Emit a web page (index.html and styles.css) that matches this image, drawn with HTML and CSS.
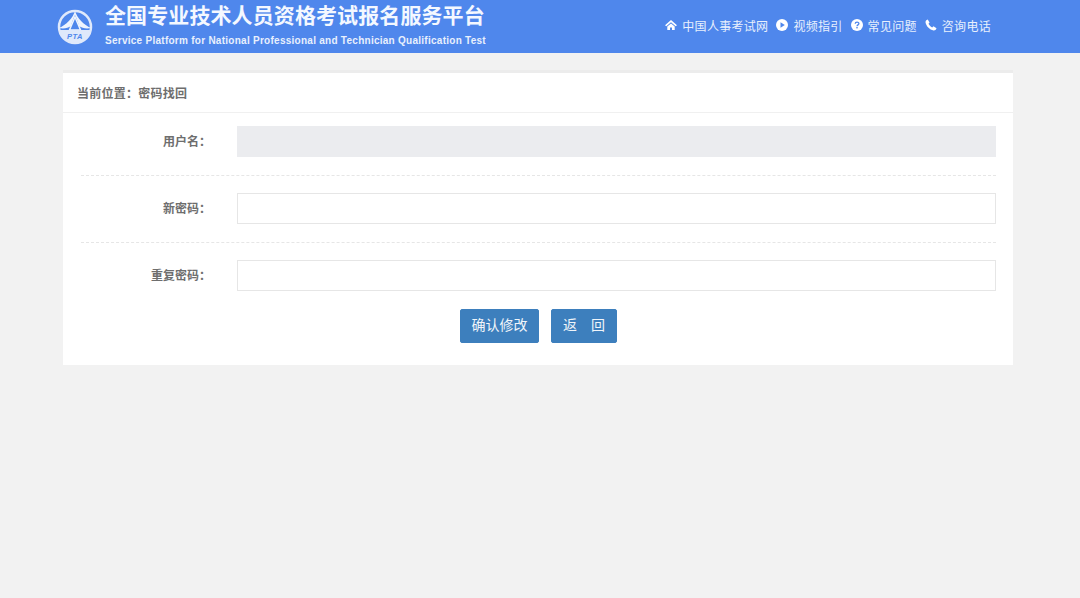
FILE: index.html
```html
<!DOCTYPE html>
<html lang="zh-CN">
<head>
<meta charset="utf-8">
<title>密码找回</title>
<link rel="stylesheet" href="styles.css">
</head>
<body>
<header class="top">
  <div class="brand">
    <svg class="logo" viewBox="0 0 36 36" aria-hidden="true">
      <circle cx="18" cy="18" r="16" fill="none" stroke="#dfe9fb" stroke-width="2.500"/>
      <path d="M18 2 C16 9 9 16 2 19 C7 20 11 19 14 17 C15 13 16.500 9 18 6 C19.500 9 21 13 22 17 C25 19 29 20 34 19 C27 16 20 9 18 2Z" fill="#eef4fe"/>
      <path d="M18 8 L23.500 21 H12.500Z" fill="none" stroke="#eef4fe" stroke-width="1.500"/>
      <path d="M2.500 21 H33.500 C32 29 26 34 18 34 C10 34 4 29 2.500 21Z" fill="#dfe9fb"/>
      <text x="18" y="29.500" class="logo-text">PTA</text>
    </svg>
    <div class="titles">
      <h1 class="title">全国专业技术人员资格考试报名服务平台</h1>
      <p class="subtitle">Service Platform for National Professional and Technician Qualification Test</p>
    </div>
  </div>
  <nav class="nav">
    <a class="nav-item"><svg class="ico" viewBox="0 0 12 12"><path d="M6 1 L12 6.200 L10.700 7.300 L6 3.200 L1.300 7.300 L0 6.200Z M2.300 7.600 L6 4.400 L9.700 7.600 V11 H7 V8.500 H5 V11 H2.300Z" fill="#fff"/></svg>中国人事考试网</a>
    <a class="nav-item"><svg class="ico" viewBox="0 0 12 12"><circle cx="6" cy="6" r="6" fill="#fff"/><path d="M4.500 3.300 L8.800 6 L4.500 8.700Z" fill="#4f87ec"/></svg>视频指引</a>
    <a class="nav-item"><svg class="ico" viewBox="0 0 12 12"><circle cx="6" cy="6" r="6" fill="#fff"/><path d="M4.200 4.700 C4.300 2.600 7.900 2.600 7.900 4.600 C7.900 5.900 6 5.900 6 7.300" fill="none" stroke="#4f87ec" stroke-width="1.300"/><rect x="5.300" y="8" width="1.400" height="1.400" fill="#4f87ec"/></svg>常见问题</a>
    <a class="nav-item"><svg class="ico" viewBox="0 0 12 12"><path d="M2.700 .5 L4.600 3.400 L3.500 4.700 C4.200 6.200 5.500 7.600 7.200 8.400 L8.500 7.300 L11.500 9.300 C11 10.800 9.800 11.700 8.600 11.500 C4.500 10.700 1.200 7.300 .5 3.300 C.4 2 1.300 1 2.700 .5Z" fill="#fff"/></svg>咨询电话</a>
  </nav>
</header>
<main class="card">
  <div class="crumb">当前位置：密码找回</div>
  <form class="form">
    <div class="row row-line">
      <label class="label">用户名：</label>
      <div class="field field-disabled"></div>
    </div>
    <div class="row row-line">
      <label class="label">新密码：</label>
      <input class="field" type="password">
    </div>
    <div class="row">
      <label class="label">重复密码：</label>
      <input class="field" type="password">
    </div>
    <div class="actions">
      <button class="btn btn-confirm" type="button">确认修改</button>
      <button class="btn btn-back" type="button">返&emsp;回</button>
    </div>
  </form>
</main>
</body>
</html>
```
FILE: styles.css
```css
* { box-sizing: border-box; }
html, body { margin: 0; height: 100%; }
body {
  background: #f2f2f2;
  font-family: "Liberation Sans", "Noto Sans CJK SC", sans-serif;
  color: #666;
}
.top {
  height: 53px;
  background: #4f87ec;
  display: flex;
  justify-content: space-between;
  padding: 0 89px 0 57px;
  color: #fff;
}
.brand { display: flex; align-items: flex-start; gap: 12px; }
.logo { width: 36px; height: 36px; margin-top: 9px; }
.logo-text {
  font: italic bold 7.500px "Liberation Sans", sans-serif;
  fill: #4f87ec;
  text-anchor: middle;
  letter-spacing: .5px;
}
.titles { padding-top: 2px; }
.title {
  margin: 0;
  font-size: 21px;
  line-height: 28px;
  font-weight: 700;
  letter-spacing: .1px;
  color: #f4f8ff;
  white-space: nowrap;
}
.subtitle {
  margin: 4px 0 0;
  font-size: 10px;
  line-height: 13px;
  font-weight: 700;
  letter-spacing: .265px;
  color: #e8f0fd;
  white-space: nowrap;
}
.nav { display: flex; align-items: center; gap: 8px; padding-bottom: 3px; }
.nav-item {
  display: flex;
  align-items: center;
  gap: 5px;
  font-size: 12px;
  letter-spacing: .3px;
  color: #e8f0fd;
}
.ico { width: 12px; height: 12px; flex: none; }
.card {
  width: 950px;
  margin: 17px 0 0 63px;
  background: #fff;
  border-top: 3px solid #ececec;
}
.crumb {
  height: 40px;
  padding-left: 14px;
  border-bottom: 1px solid #f0f0f0;
  font-size: 12px;
  font-weight: 700;
  letter-spacing: .25px;
  line-height: 42px;
  color: #6e6e6e;
}
.form { padding: 13px 17px 22px 18px; }
.row { display: flex; align-items: flex-start; }
.row-line {
  padding-bottom: 18px;
  border-bottom: 1px dashed #e6e6e6;
  margin-bottom: 17px;
}
.label {
  width: 130px;
  height: 31px;
  margin-right: 26px;
  text-align: right;
  font-size: 12px;
  font-weight: 700;
  line-height: 31px;
  padding-top: 1px;
  color: #6e6e6e;
  flex: none;
}
.field {
  display: block;
  flex: 1;
  min-width: 0;
  height: 31px;
  padding: 0 8px;
  border: 1px solid #e6e6e6;
  background: #fff;
  outline: 0;
}
.field-disabled { background: #ebecef; border-color: #ebecef; }
.actions { display: flex; justify-content: center; gap: 12px; margin-top: 18px; }
.btn {
  height: 34px;
  padding: 0 0 2px;
  border: 1px solid #3d7fbd;
  border-radius: 2px;
  background: #3d7fbd;
  color: #f0f5fa;
  font-family: inherit;
  font-size: 14px;
  line-height: 1;
}
.btn-confirm { width: 79px; }
.btn-back { width: 66px; }
```
